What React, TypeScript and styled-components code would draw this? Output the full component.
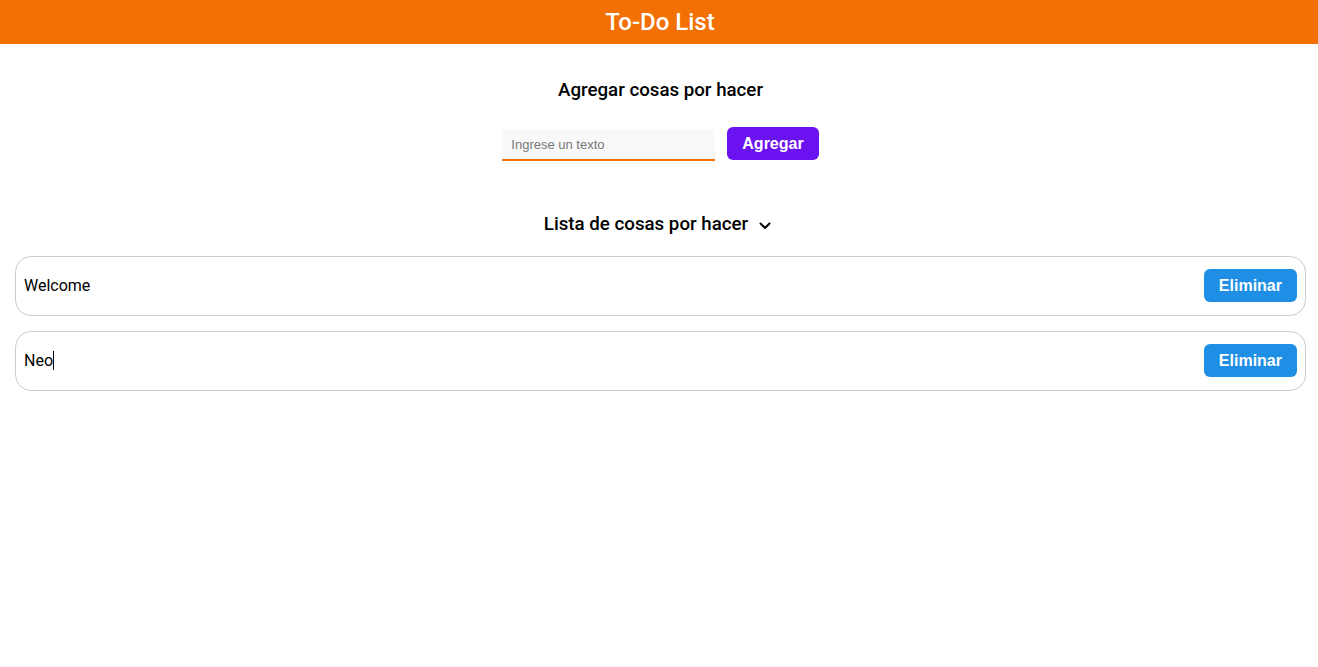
import React from 'react';
import styled, { createGlobalStyle } from 'styled-components';

const GlobalStyle = createGlobalStyle`
  body {
    margin: 0;
    background: #ffffff;
    font-family: Roboto, "Liberation Sans", sans-serif;
  }
`;

const todos = ['Welcome', 'Neo'];

const App = () => {
  const [text, setText] = React.useState<string>('');

  return (
    <>
      <GlobalStyle />
      <Header>
        <Title>To-Do List</Title>
      </Header>
      <Main>
        <SectionTitle>Agregar cosas por hacer</SectionTitle>
        <Form onSubmit={(e) => e.preventDefault()}>
          <TextInput
            placeholder="Ingrese un texto"
            value={text}
            onChange={(e) => setText(e.target.value)}
          />
          <ActionButton color="#6b12f1">Agregar</ActionButton>
        </Form>
        <ListTitle>
          Lista de cosas por hacer
          <svg width="12" height="8" viewBox="0 0 12 8" fill="none" stroke="#000" strokeWidth="2" strokeLinecap="round" strokeLinejoin="round">
            <path d="M1.5 1.5l4.5 4.5 4.5-4.5" />
          </svg>
        </ListTitle>
        <List>
          {todos.map((item, i) => (
            <Item key={item}>
              <ItemText>
                {item}
                {i === todos.length - 1 && <Caret />}
              </ItemText>
              <ActionButton color="#1e8fe4">Eliminar</ActionButton>
            </Item>
          ))}
        </List>
      </Main>
    </>
  );
};

export default App;

const Header = styled.header`
  height: 44px;
  background: #f27004;
  display: flex;
  align-items: center;
  justify-content: center;
`;

const Title = styled.h1`
  margin: 0;
  color: #ffffff;
  font-size: 24px;
  font-weight: 500;
  transform: translateX(1px);
`;

const Main = styled.main`
  display: flex;
  flex-direction: column;
  align-items: center;
  padding: 0 12px 0 15px;
`;

const SectionTitle = styled.h3`
  margin: 35px 0 0;
  font-size: 18.72px;
  font-weight: 500;
  line-height: 22px;
  color: #000;
`;

const Form = styled.form`
  display: flex;
  align-items: center;
  gap: 12px;
  margin-top: 25px;
`;

const TextInput = styled.input`
  width: 213px;
  height: 32px;
  box-sizing: border-box;
  border: none;
  border-bottom: 2px solid #f27004;
  background: #f9f9f9;
  padding: 0 9px;
  font-family: "Liberation Sans", Arial, sans-serif;
  font-size: 13px;
  outline: none;
  margin-top: 3px;

  &::placeholder {
    color: #777;
  }
`;

const ActionButton = styled.button<{ color: string }>`
  height: 33px;
  padding: 0 15px;
  border: none;
  border-radius: 6px;
  background: ${(p) => p.color};
  color: #ffffff;
  font-family: "Liberation Sans", Arial, sans-serif;
  font-size: 16px;
  font-weight: bold;
  cursor: pointer;
`;

const ListTitle = styled.h3`
  display: flex;
  align-items: center;
  gap: 11px;
  margin: 52px 6px 0 0;
  font-size: 18.72px;
  font-weight: 500;
  line-height: 22px;
  color: #000;

  svg {
    margin-top: 3px;
  }
`;

const List = styled.ul`
  list-style: none;
  margin: 21px 0 0;
  padding: 0;
  align-self: stretch;
  display: flex;
  flex-direction: column;
  gap: 15px;
`;

const Item = styled.li`
  height: 60px;
  box-sizing: border-box;
  border: 1px solid #cccccc;
  border-radius: 16px;
  display: flex;
  align-items: center;
  justify-content: space-between;
  padding: 0 8px 1px;
`;

const ItemText = styled.span`
  font-size: 16px;
  color: #000;
  display: flex;
  align-items: center;
`;

const Caret = styled.span`
  display: inline-block;
  width: 1px;
  height: 19px;
  background: #000;
`;
